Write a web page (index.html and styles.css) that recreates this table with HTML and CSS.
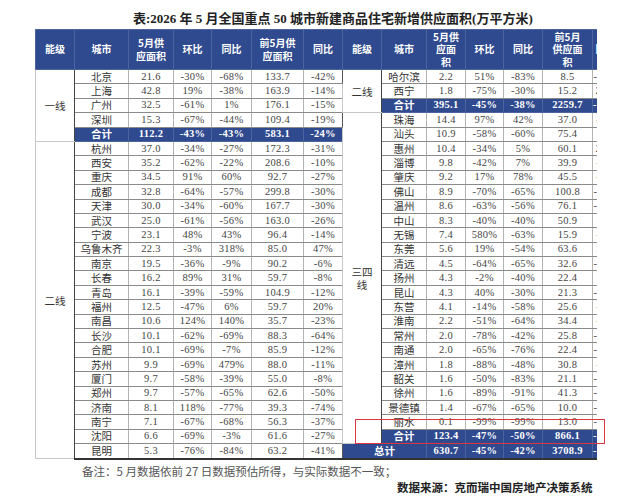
FILE: index.html
```html
<!DOCTYPE html>
<html lang="zh">
<head>
<meta charset="utf-8">
<title>重点50城市新建商品住宅新增供应面积</title>
<link rel="stylesheet" href="styles.css">
</head>
<body>
<div class="title">表:2026 年 5 月全国重点 50 城市新建商品住宅新增供应面积(万平方米)</div>
<div class="sheet">
  <div class="clip">
    <table class="grid">
      <colgroup>
        <col class="c-lv"><col class="c-city1"><col class="c-a1"><col class="c-b1"><col class="c-c1"><col class="c-d1"><col class="c-e1">
        <col class="c-lv"><col class="c-city2"><col class="c-a2"><col class="c-b2"><col class="c-c2"><col class="c-d2"><col class="c-e2">
      </colgroup>
      <thead>
        <tr>
          <th>能级</th><th>城市</th><th>5月供<br>应面积</th><th>环比</th><th>同比</th><th>前5月供<br>应面积</th><th class="sep">同比</th>
          <th>能级</th><th>城市</th><th>5月供<br>应面<br>积</th><th>环比</th><th>同比</th><th>前5月<br>供应面<br>积</th><th>同比</th>
        </tr>
      </thead>
      <tbody>
        <tr><td class="lv" rowspan="5">一线</td><td class="city">北京</td><td>21.6</td><td>-30%</td><td>-68%</td><td>133.7</td><td class="sep">-42%</td>
            <td class="lv" rowspan="3">二线</td><td class="city">哈尔滨</td><td>2.2</td><td>51%</td><td>-83%</td><td>8.5</td><td>-12%</td></tr>
        <tr><td class="city">上海</td><td>42.8</td><td>19%</td><td>-38%</td><td>163.9</td><td class="sep">-14%</td>
            <td class="city">西宁</td><td>1.8</td><td>-75%</td><td>-30%</td><td>15.2</td><td>23%</td></tr>
        <tr><td class="city">广州</td><td>32.5</td><td>-61%</td><td>1%</td><td>176.1</td><td class="sep">-15%</td>
            <td class="sum city">合计</td><td class="sum">395.1</td><td class="sum">-45%</td><td class="sum">-38%</td><td class="sum">2259.7</td><td class="sum">-26%</td></tr>
        <tr><td class="city">深圳</td><td>15.3</td><td>-67%</td><td>-44%</td><td>109.4</td><td class="sep">-19%</td>
            <td class="lv" rowspan="23">三四<br>线</td><td class="city">珠海</td><td>14.4</td><td>97%</td><td>42%</td><td>37.0</td><td>-4%</td></tr>
        <tr><td class="sum city">合计</td><td class="sum">112.2</td><td class="sum">-43%</td><td class="sum">-43%</td><td class="sum">583.1</td><td class="sum sep">-24%</td>
            <td class="city">汕头</td><td>10.9</td><td>-58%</td><td>-60%</td><td>75.4</td><td>5%</td></tr>
        <tr><td class="lv" rowspan="22">二线</td><td class="city">杭州</td><td>37.0</td><td>-34%</td><td>-27%</td><td>172.3</td><td class="sep">-31%</td>
            <td class="city">惠州</td><td>10.4</td><td>-34%</td><td>5%</td><td>60.1</td><td>21%</td></tr>
        <tr><td class="city">西安</td><td>35.2</td><td>-62%</td><td>-22%</td><td>208.6</td><td class="sep">-10%</td>
            <td class="city">淄博</td><td>9.8</td><td>-42%</td><td>7%</td><td>39.9</td><td>-9%</td></tr>
        <tr><td class="city">重庆</td><td>34.5</td><td>91%</td><td>60%</td><td>92.7</td><td class="sep">-27%</td>
            <td class="city">肇庆</td><td>9.2</td><td>17%</td><td>78%</td><td>45.5</td><td>-3%</td></tr>
        <tr><td class="city">成都</td><td>32.8</td><td>-64%</td><td>-57%</td><td>299.8</td><td class="sep">-30%</td>
            <td class="city">佛山</td><td>8.9</td><td>-70%</td><td>-65%</td><td>100.8</td><td>-41%</td></tr>
        <tr><td class="city">天津</td><td>30.0</td><td>-34%</td><td>-60%</td><td>167.7</td><td class="sep">-30%</td>
            <td class="city">温州</td><td>8.6</td><td>-63%</td><td>-56%</td><td>76.1</td><td>-35%</td></tr>
        <tr><td class="city">武汉</td><td>25.0</td><td>-61%</td><td>-56%</td><td>163.0</td><td class="sep">-26%</td>
            <td class="city">中山</td><td>8.3</td><td>-40%</td><td>-40%</td><td>50.9</td><td>8%</td></tr>
        <tr><td class="city">宁波</td><td>23.1</td><td>48%</td><td>43%</td><td>96.4</td><td class="sep">-14%</td>
            <td class="city">无锡</td><td>7.4</td><td>580%</td><td>-63%</td><td>15.9</td><td>-7%</td></tr>
        <tr><td class="city">乌鲁木齐</td><td>22.3</td><td>-3%</td><td>318%</td><td>85.0</td><td class="sep">47%</td>
            <td class="city">东莞</td><td>5.6</td><td>19%</td><td>-54%</td><td>63.6</td><td>12%</td></tr>
        <tr><td class="city">南京</td><td>19.5</td><td>-36%</td><td>-9%</td><td>90.2</td><td class="sep">-6%</td>
            <td class="city">清远</td><td>4.5</td><td>-64%</td><td>-65%</td><td>32.6</td><td>-25%</td></tr>
        <tr><td class="city">长春</td><td>16.2</td><td>89%</td><td>31%</td><td>59.7</td><td class="sep">-8%</td>
            <td class="city">扬州</td><td>4.3</td><td>-2%</td><td>-40%</td><td>22.4</td><td>6%</td></tr>
        <tr><td class="city">青岛</td><td>16.1</td><td>-39%</td><td>-59%</td><td>104.9</td><td class="sep">-12%</td>
            <td class="city">昆山</td><td>4.3</td><td>40%</td><td>-30%</td><td>21.3</td><td>-38%</td></tr>
        <tr><td class="city">福州</td><td>12.5</td><td>-47%</td><td>6%</td><td>59.7</td><td class="sep">20%</td>
            <td class="city">东营</td><td>4.1</td><td>-14%</td><td>-58%</td><td>25.6</td><td>-4%</td></tr>
        <tr><td class="city">南昌</td><td>10.6</td><td>124%</td><td>140%</td><td>35.7</td><td class="sep">-23%</td>
            <td class="city">淮南</td><td>2.2</td><td>-51%</td><td>-64%</td><td>34.4</td><td>-1%</td></tr>
        <tr><td class="city">长沙</td><td>10.1</td><td>-62%</td><td>-69%</td><td>88.3</td><td class="sep">-64%</td>
            <td class="city">常州</td><td>2.0</td><td>-78%</td><td>-42%</td><td>25.8</td><td>-46%</td></tr>
        <tr><td class="city">合肥</td><td>10.1</td><td>-69%</td><td>-7%</td><td>85.9</td><td class="sep">-12%</td>
            <td class="city">南通</td><td>2.0</td><td>-65%</td><td>-76%</td><td>22.4</td><td>-52%</td></tr>
        <tr><td class="city">苏州</td><td>9.9</td><td>-69%</td><td>479%</td><td>88.0</td><td class="sep">-11%</td>
            <td class="city">漳州</td><td>1.8</td><td>-88%</td><td>-48%</td><td>30.8</td><td>-7%</td></tr>
        <tr><td class="city">厦门</td><td>9.7</td><td>-58%</td><td>-39%</td><td>55.0</td><td class="sep">-8%</td>
            <td class="city">韶关</td><td>1.6</td><td>-50%</td><td>-83%</td><td>21.1</td><td>-33%</td></tr>
        <tr><td class="city">郑州</td><td>9.7</td><td>-57%</td><td>-65%</td><td>62.6</td><td class="sep">-50%</td>
            <td class="city">徐州</td><td>1.6</td><td>-89%</td><td>-91%</td><td>41.3</td><td>-41%</td></tr>
        <tr><td class="city">济南</td><td>8.1</td><td>118%</td><td>-77%</td><td>39.3</td><td class="sep">-74%</td>
            <td class="city">景德镇</td><td>1.4</td><td>-67%</td><td>-65%</td><td>10.0</td><td>-37%</td></tr>
        <tr><td class="city">南宁</td><td>7.1</td><td>-67%</td><td>-68%</td><td>56.3</td><td class="sep">-37%</td>
            <td class="city">丽水</td><td>0.1</td><td>-99%</td><td>-99%</td><td>13.0</td><td>-30%</td></tr>
        <tr><td class="city">沈阳</td><td>6.6</td><td>-69%</td><td>-3%</td><td>61.6</td><td class="sep">-27%</td>
            <td class="sum city">合计</td><td class="sum">123.4</td><td class="sum">-47%</td><td class="sum">-50%</td><td class="sum">866.1</td><td class="sum">-30%</td></tr>
        <tr class="last"><td class="city">昆明</td><td>5.3</td><td>-76%</td><td>-84%</td><td>63.2</td><td class="sep">-41%</td>
            <td class="sum city" colspan="2">总计</td><td class="sum">630.7</td><td class="sum">-45%</td><td class="sum">-42%</td><td class="sum">3708.9</td><td class="sum">-28%</td></tr>
      </tbody>
    </table>
  </div>
  <div class="mark"></div>
</div>
<p class="note">备注：5 月数据依前 27 日数据预估所得，与实际数据不一致；</p>
<p class="source">数据来源：克而瑞中国房地产决策系统</p>
</body>
</html>
```
FILE: styles.css
```css
body {
  margin: 0;
  background: #ffffff;
  font-family: "Liberation Serif", "Noto Sans CJK SC", serif;
  color: #333333;
}

.title {
  box-sizing: border-box;
  height: 29px;
  padding: 10px 0 0 133px;
  font-size: 13px;
  line-height: 18px;
  font-weight: bold;
  color: #222222;
  white-space: nowrap;
}

.sheet {
  position: relative;
  margin-left: 35px;
  width: 580px;
}

.clip {
  width: 562px;
  overflow: hidden;
}

.grid {
  border-collapse: collapse;
  table-layout: fixed;
  width: 583px;
}

.c-lv { width: 39px; }
.c-city1 { width: 54px; }
.c-a1 { width: 45px; }
.c-b1 { width: 38px; }
.c-c1 { width: 40px; }
.c-d1 { width: 52px; }
.c-e1 { width: 39px; }
.c-city2 { width: 45px; }
.c-a2 { width: 39px; }
.c-b2 { width: 38px; }
.c-c2 { width: 39px; }
.c-d2 { width: 50px; }
.c-e2 { width: 26px; }

.grid th {
  height: 39px;
  padding: 0;
  background: #2f4a8e;
  color: #ffffff;
  font-family: "Noto Sans CJK SC", sans-serif;
  font-size: 10px;
  line-height: 12.5px;
  font-weight: bold;
  border: 1px solid #4d649d;
  text-align: center;
  vertical-align: middle;
  white-space: nowrap;
  overflow: hidden;
}

.grid td {
  height: 13.4px;
  padding: 0;
  border: 1px solid #8a8a8a;
  border-left-color: #b4b4b4;
  border-right-color: #b4b4b4;
  text-align: center;
  vertical-align: middle;
  font-size: 10.5px;
  line-height: 12px;
  color: #444444;
  white-space: nowrap;
  overflow: hidden;
  letter-spacing: 0.3px;
}

.grid td.city {
  font-family: "Noto Sans CJK SC", sans-serif;
  font-size: 10.5px;
  letter-spacing: 0;
  color: #333333;
  border-left-color: #444444;
}

.grid td.lv {
  font-family: "Noto Sans CJK SC", sans-serif;
  font-size: 10.5px;
  line-height: 13px;
  letter-spacing: 0;
  color: #333333;
  border-color: #c8c8c8;
  border-right-color: #444444;
  background: #ffffff;
}

.grid td.sum {
  background: #2f4a8e;
  color: #ffffff;
  font-weight: bold;
  border-color: #4d649d;
}

.grid td.sep {
  border-right-color: #555555;
}

.grid tr.last td {
  border-bottom: 2px solid #333333;
}

.mark {
  position: absolute;
  left: 320px;
  top: 390px;
  width: 250px;
  height: 25px;
  box-sizing: border-box;
  border: 1.5px solid #d9363e;
}

.note {
  margin: 3px 0 0 82px;
  font-family: "Noto Sans CJK SC", sans-serif;
  font-size: 11.5px;
  line-height: 16px;
  color: #555555;
  white-space: nowrap;
}

.source {
  margin: 0 0 0 397px;
  font-family: "Noto Sans CJK SC", sans-serif;
  font-size: 11.5px;
  line-height: 16px;
  font-weight: bold;
  color: #222222;
  white-space: nowrap;
}
```
